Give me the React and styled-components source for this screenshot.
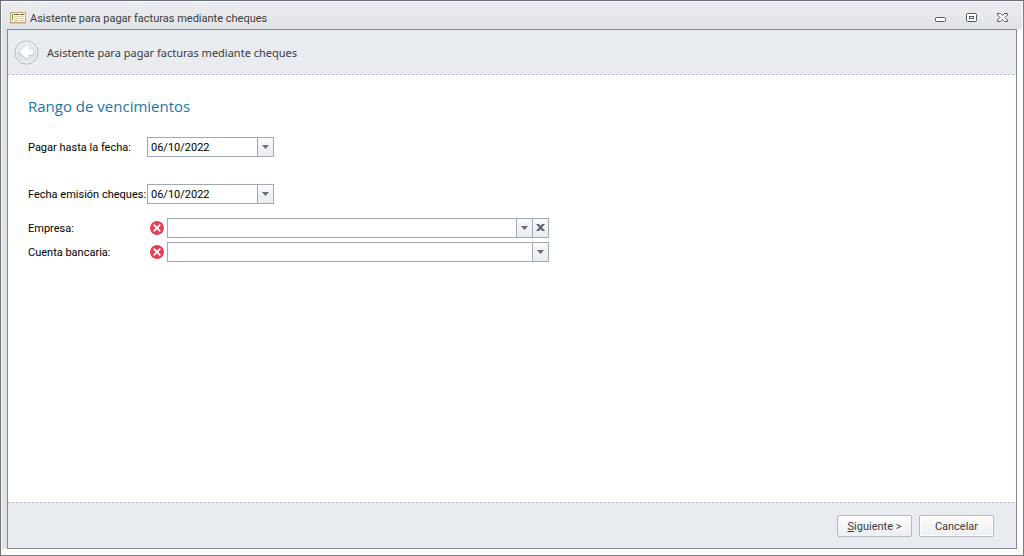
import React, { useState } from "react";
import styled, { createGlobalStyle } from "styled-components";

const GlobalStyle = createGlobalStyle`
  *, *::before, *::after { box-sizing: border-box; }
  body { margin: 0; background: #fcfcfb; }
  button, input, select { font: inherit; color: inherit; }
`;

const uiFont = `Roboto, "Noto Sans", sans-serif`;
const headerFont = `"Noto Sans", "Open Sans", sans-serif`;
const headingFont = `"Open Sans", "Noto Sans", sans-serif`;

const Window = styled.div`
  display: flex;
  flex-direction: column;
  min-height: 100vh;
  padding: 1px 6px 6px 1px;
  border: 1px solid #7b7d81;
  border-top-color: #666a76;
  border-left-color: #6d7178;
  background: #fcfcfb;
  font: 11px/15px ${uiFont};
  color: #000;
`;

const TitleBar = styled.div`
  display: flex;
  align-items: center;
  height: 27px;
  margin-right: -5px;
  padding: 4px 13px 0 8px;
  background: linear-gradient(#ebecef, #e1e4e6);
  color: #3b3b3b;
`;

const WindowTitle = styled.div`
  flex: 1;
  margin-left: 4px;
  padding-top: 1px;
`;

const WindowControls = styled.div`
  display: flex;
  gap: 20px;
`;

const IconButton = styled.button`
  display: flex;
  padding: 0;
  border: 0;
  background: none;
`;

const Frame = styled.div`
  flex: 1;
  display: flex;
  padding-left: 5px;
  background: #e3e4e6;
`;

const Panel = styled.div`
  flex: 1;
  display: flex;
  flex-direction: column;
  border: 1px solid #868b93;
  background: #fff;
`;

const Header = styled.header`
  display: flex;
  align-items: center;
  gap: 8px;
  height: 44px;
  padding-left: 6px;
  background: #e8ebf0;
  font-family: ${headerFont};
  color: #3b3b3b;
`;

const Dashes = styled.div`
  height: 1px;
  background: repeating-linear-gradient(90deg, #b5bac7 0 2px, #e8ebf0 2px 4px);
`;

const Body = styled.main`
  flex: 1;
  padding: 20px;
`;

const Heading = styled.h1`
  margin: 0 0 20px;
  font: 15px/22px ${headingFont};
  color: #1d74ad;
`;

const Row = styled.div`
  display: grid;
  grid-template-columns: 119px auto;
  justify-content: start;
  align-items: center;
  margin-bottom: ${(p) => p.$space}px;
`;

const Label = styled.label`
  padding-top: 1px;
  white-space: nowrap;
`;

const Field = styled.div`
  display: flex;
  width: ${(p) => p.$width}px;
  height: 20px;
  border: 1px solid #a2a7b2;
  background: #fff;
`;

const DateInput = styled.input`
  flex: 1;
  min-width: 0;
  padding: 1px 3px 0;
  border: 0;
  outline: 0;
  background: none;
`;

const FieldButton = styled.button`
  display: flex;
  align-items: center;
  justify-content: center;
  width: 16px;
  padding: 0;
  border: 0;
  border-left: 1px solid #a2a7b2;
  background: linear-gradient(#f9fafb, #e8ecf0);
`;

const SelectWrap = styled.div`
  flex: 1;
  display: grid;
  grid-template-columns: 1fr 16px;
`;

const Select = styled.select`
  grid-area: 1 / 1 / 2 / 3;
  width: 100%;
  padding: 0 20px 0 3px;
  border: 0;
  outline: 0;
  appearance: none;
  background: none;
`;

const SelectArrow = styled.span`
  grid-area: 1 / 2;
  display: flex;
  align-items: center;
  justify-content: center;
  border-left: 1px solid #a2a7b2;
  background: linear-gradient(#f9fafb, #e8ecf0);
  pointer-events: none;
`;

const Required = styled.div`
  display: flex;
  align-items: center;
  gap: 3px;
  padding-left: 3px;
`;

const Footer = styled.footer`
  display: flex;
  justify-content: flex-end;
  gap: 7px;
  height: 45px;
  padding: 12px 22px 0 0;
  background: #e8ebf0;
`;

const Button = styled.button`
  width: 75px;
  height: 22px;
  padding: 1px 0 0;
  border: 1px solid #b6bac2;
  border-radius: 2px;
  background: linear-gradient(#fcfcfd, #eceff2);
  box-shadow: ${(p) => (p.$bright ? "inset 0 0 0 1px #fff" : "none")};
  color: #3b3b3b;
`;

const Arrow = () => (
  <svg width="7" height="4" viewBox="0 0 7 4" aria-hidden="true">
    <path d="M0 0h7L3.500 4z" fill="#636b75" />
  </svg>
);

const ErrorIcon = () => (
  <svg width="14" height="14" viewBox="0 0 14 14" role="img" aria-label="Error">
    <circle cx="7" cy="7" r="7" fill="#e4405b" />
    <path d="M3.700 3.700l6.600 6.600M10.300 3.700l-6.600 6.600" stroke="#fff" strokeWidth="1.700" />
  </svg>
);

const ChequeIcon = () => (
  <svg width="16" height="12" viewBox="0 0 16 12" shapeRendering="crispEdges" aria-hidden="true">
    <path d="M0 11h16v1H0z" fill="#c8c9ca" />
    <path d="M0 0h16v11H0z" fill="#c5a574" />
    <path d="M1 1h14v9H1z" fill="#fdf6e2" />
    <path d="M2 2h1v6H2z" fill="#5da047" />
    <path d="M4 2h5v1H4zM10 2h4v1h-4z" fill="#6d6454" />
    <path d="M4 4h10v1H4zM4 6h10v1H4z" fill="#e2cfac" />
    <path d="M4 8h4v1H4zM10 8h4v1h-4z" fill="#d3c19c" />
  </svg>
);

const BackIcon = () => (
  <svg width="25" height="25" viewBox="0 0 25 25" aria-hidden="true">
    <defs>
      <linearGradient id="disc" x1="0" y1="0" x2="0" y2="1">
        <stop offset="0" stopColor="#eceff2" />
        <stop offset="0.48" stopColor="#dfe4e9" />
        <stop offset="0.52" stopColor="#d2dae1" />
        <stop offset="1" stopColor="#e8eef2" />
      </linearGradient>
    </defs>
    <circle cx="12.5" cy="12.5" r="11.5" fill="url(#disc)" stroke="#b0b5be" />
    <circle cx="12.5" cy="12.5" r="10.5" fill="none" stroke="#f3f5f7" />
    <path
      d="M6.500 13.200l5.500-5.700h2v3.700h4.500v4H14V19h-2z"
      fill="#b9c2cc"
      stroke="#b9c2cc"
      strokeLinejoin="round"
    />
    <path
      d="M6.500 12.200l5.500-5.700h2v3.700h4.500v4H14V18h-2z"
      fill="#fff"
      stroke="#fff"
      strokeLinejoin="round"
    />
  </svg>
);

const MinimizeIcon = () => (
  <svg width="11" height="11" viewBox="0 0 11 11" aria-hidden="true">
    <rect x="0.5" y="5.500" width="10" height="4" rx="1" fill="#fff" stroke="#545a64" />
  </svg>
);

const MaximizeIcon = () => (
  <svg width="11" height="11" viewBox="0 0 11 11" aria-hidden="true">
    <rect x="0.5" y="1.500" width="10" height="8" rx="1" fill="#fff" stroke="#545a64" />
    <rect x="3.500" y="4.500" width="4" height="2" fill="#fff" stroke="#545a64" />
  </svg>
);

const CloseIcon = () => (
  <svg width="12" height="11" viewBox="0 0 12 11" aria-hidden="true">
    <path
      d="M0.500 1.500h3l2 2 2-2h3v1.500l-2.500 2.500 2.500 2.500v1.500h-3l-2-2-2 2h-3V8l2.500-2.500L0.500 3z"
      fill="#fff"
      stroke="#545a64"
      strokeLinejoin="round"
    />
  </svg>
);

const ClearIcon = () => (
  <svg width="9" height="8" viewBox="0 0 9 8" aria-hidden="true">
    <path d="M0 0h3l1.500 2L6 0h3L6 3.500 9 7H6L4.500 5 3 7H0l3-3.500z" fill="#5b636d" />
  </svg>
);

function DateField({ id, label, space }) {
  const [value, setValue] = useState("06/10/2022");
  return (
    <Row $space={space}>
      <Label htmlFor={id}>{label}</Label>
      <Field $width={127}>
        <DateInput id={id} type="text" value={value} onChange={(e) => setValue(e.target.value)} />
        <FieldButton type="button" aria-label="Abrir calendario"><Arrow /></FieldButton>
      </Field>
    </Row>
  );
}

function SelectField({ id, label, space, clearable }) {
  return (
    <Row $space={space}>
      <Label htmlFor={id}>{label}</Label>
      <Required>
        <ErrorIcon />
        <Field $width={382}>
          <SelectWrap>
            <Select id={id} defaultValue=""><option value="" /></Select>
            <SelectArrow><Arrow /></SelectArrow>
          </SelectWrap>
          {clearable && (
            <FieldButton type="button" aria-label="Borrar"><ClearIcon /></FieldButton>
          )}
        </Field>
      </Required>
    </Row>
  );
}

export default function App() {
  return (
    <>
      <GlobalStyle />
      <Window>
        <TitleBar>
          <ChequeIcon />
          <WindowTitle>Asistente para pagar facturas mediante cheques</WindowTitle>
          <WindowControls>
            <IconButton type="button" aria-label="Minimizar"><MinimizeIcon /></IconButton>
            <IconButton type="button" aria-label="Maximizar"><MaximizeIcon /></IconButton>
            <IconButton type="button" aria-label="Cerrar"><CloseIcon /></IconButton>
          </WindowControls>
        </TitleBar>
        <Frame>
          <Panel>
            <Header>
              <IconButton type="button" aria-label="Atrás"><BackIcon /></IconButton>
              <span>Asistente para pagar facturas mediante cheques</span>
            </Header>
            <Dashes />
            <Body>
              <Heading>Rango de vencimientos</Heading>
              <DateField id="hasta" label="Pagar hasta la fecha:" space={27} />
              <DateField id="emision" label="Fecha emisión cheques:" space={14} />
              <SelectField id="empresa" label="Empresa:" space={4} clearable />
              <SelectField id="cuenta" label="Cuenta bancaria:" space={0} />
            </Body>
            <Dashes />
            <Footer>
              <Button type="button"><u>S</u>iguiente &gt;</Button>
              <Button type="button" $bright>Cancelar</Button>
            </Footer>
          </Panel>
        </Frame>
      </Window>
    </>
  );
}
